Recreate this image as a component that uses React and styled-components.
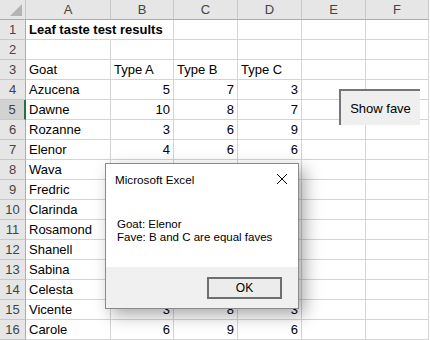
import React from "react";
import styled, { createGlobalStyle } from "styled-components";

const GlobalStyle = createGlobalStyle`
  body {
    margin: 0;
    background: #ffffff;
    font-family: "Liberation Sans", Arial, sans-serif;
    overflow: hidden;
  }
`;

const colWidths = [26, 85, 63, 64, 64, 64, 63];
const letters = ["A", "B", "C", "D", "E", "F"];

// rows 8-14 have B and C hidden behind the message box, only D peeks out
const rows = [
  ["Leaf taste test results", "", "", "", "", ""],
  ["", "", "", "", "", ""],
  ["Goat", "Type A", "Type B", "Type C", "", ""],
  ["Azucena", 5, 7, 3, "", ""],
  ["Dawne", 10, 8, 7, "", ""],
  ["Rozanne", 3, 6, 9, "", ""],
  ["Elenor", 4, 6, 6, "", ""],
  ["Wava", "", "", 9, "", ""],
  ["Fredric", "", "", 8, "", ""],
  ["Clarinda", "", "", 7, "", ""],
  ["Rosamond", "", "", 8, "", ""],
  ["Shanell", "", "", 2, "", ""],
  ["Sabina", "", "", 2, "", ""],
  ["Celesta", "", "", 3, "", ""],
  ["Vicente", 3, 8, 3, "", ""],
  ["Carole", 6, 9, 6, "", ""],
];

const Sheet = styled.div`
  position: relative;
  width: 430px;
  height: 340px;
  overflow: hidden;
  background: #fff;
`;

const Row = styled.div`
  display: grid;
  grid-template-columns: ${colWidths.map((w) => w + "px").join(" ")};
  height: 20px;
`;

const Corner = styled.div`
  box-sizing: border-box;
  background: #e6e6e6;
  border-right: 1px solid #c8c8c8;
  border-bottom: 1px solid #ababab;
  display: flex;
  align-items: flex-end;
  justify-content: flex-end;
  padding: 0 3px 3px 0;
`;

const ColHead = styled.div`
  box-sizing: border-box;
  background: #e6e6e6;
  border-right: 1px solid #c8c8c8;
  border-bottom: 1px solid #ababab;
  color: #444;
  font-size: 13px;
  line-height: 19px;
  text-align: center;
`;

const RowHead = styled.div`
  box-sizing: border-box;
  background: ${(p) => (p.$active ? "#d2d2d2" : "#e6e6e6")};
  border-right: ${(p) => (p.$active ? "2px solid #217346" : "1px solid #ababab")};
  border-bottom: 1px solid #c8c8c8;
  color: #444;
  font-size: 13px;
  line-height: 19px;
  text-align: center;
`;

const Cell = styled.div`
  box-sizing: border-box;
  border-right: 1px solid #d4d4d4;
  border-bottom: 1px solid #d4d4d4;
  padding: 0 3px;
  font-size: 13px;
  line-height: 19px;
  color: #000;
  white-space: nowrap;
  overflow: ${(p) => (p.$spill ? "visible" : "hidden")};
  text-align: ${(p) => (p.$num ? "right" : "left")};
  font-weight: ${(p) => (p.$bold ? 700 : 400)};
  position: relative;
  z-index: ${(p) => (p.$spill ? 1 : 0)};
  ${(p) => p.$spill && "border-right-color: transparent;"}
`;

const ShowFave = styled.button`
  position: absolute;
  left: 339px;
  top: 89px;
  width: 81px;
  height: 36px;
  box-sizing: border-box;
  border: none;
  border-top: 2px solid #767676;
  border-left: 2px solid #767676;
  background: #efefef;
  font-family: "Liberation Sans", Arial, sans-serif;
  font-size: 13px;
  color: #000;
  padding: 0;
`;

const Dialog = styled.div`
  position: absolute;
  left: 105px;
  top: 163px;
  width: 194px;
  height: 146px;
  box-sizing: border-box;
  border: 1px solid #8a8a8a;
  background: #fff;
  box-shadow: 6px 6px 16px rgba(0, 0, 0, 0.34);
  display: flex;
  flex-direction: column;
  z-index: 5;
`;

const TitleBar = styled.div`
  height: 30px;
  display: flex;
  align-items: center;
  justify-content: space-between;
  padding: 0 10px 0 9px;
  font-size: 11.7px;
  color: #000;
`;

const Close = styled.span`
  display: flex;
  width: 12px;
  height: 12px;
  margin-top: -1px;
`;

const Body = styled.div`
  flex: 1;
  padding: 24px 11px 0;
  font-size: 11.5px;
  line-height: 13px;
  color: #000;
`;

const Footer = styled.div`
  height: 41px;
  background: #f0f0f0;
  display: flex;
  align-items: center;
  justify-content: flex-end;
  padding-right: 16px;
`;

const OkButton = styled.button`
  width: 75px;
  height: 22px;
  box-sizing: border-box;
  border: 2px solid #6f6f6f;
  background: #ececec;
  font-family: "Liberation Sans", Arial, sans-serif;
  font-size: 12px;
  color: #000;
  padding: 0;
`;

export default function App() {
  return (
    <>
      <GlobalStyle />
      <Sheet>
        <Row>
          <Corner>
            <svg width="12" height="12" viewBox="0 0 12 12">
              <polygon points="12,0 12,12 0,12" fill="#b4b4b4" />
            </svg>
          </Corner>
          {letters.map((l) => (
            <ColHead key={l}>{l}</ColHead>
          ))}
        </Row>
        {rows.map((r, i) => (
          <Row key={i}>
            <RowHead $active={i === 4}>{i + 1}</RowHead>
            {r.map((v, j) => (
              <Cell
                key={j}
                $num={typeof v === "number"}
                $bold={i === 0 && j === 0}
                $spill={i === 0 && j === 0}
              >
                {v}
              </Cell>
            ))}
          </Row>
        ))}
        <ShowFave>Show fave</ShowFave>
        <Dialog>
          <TitleBar>
            <span>Microsoft Excel</span>
            <Close>
              <svg width="12" height="12" viewBox="0 0 12 12">
                <path d="M1 1 L11 11 M11 1 L1 11" stroke="#000" strokeWidth="1" />
              </svg>
            </Close>
          </TitleBar>
          <Body>
            <div>Goat: Elenor</div>
            <div>Fave: B and C are equal faves</div>
          </Body>
          <Footer>
            <OkButton>OK</OkButton>
          </Footer>
        </Dialog>
      </Sheet>
    </>
  );
}
